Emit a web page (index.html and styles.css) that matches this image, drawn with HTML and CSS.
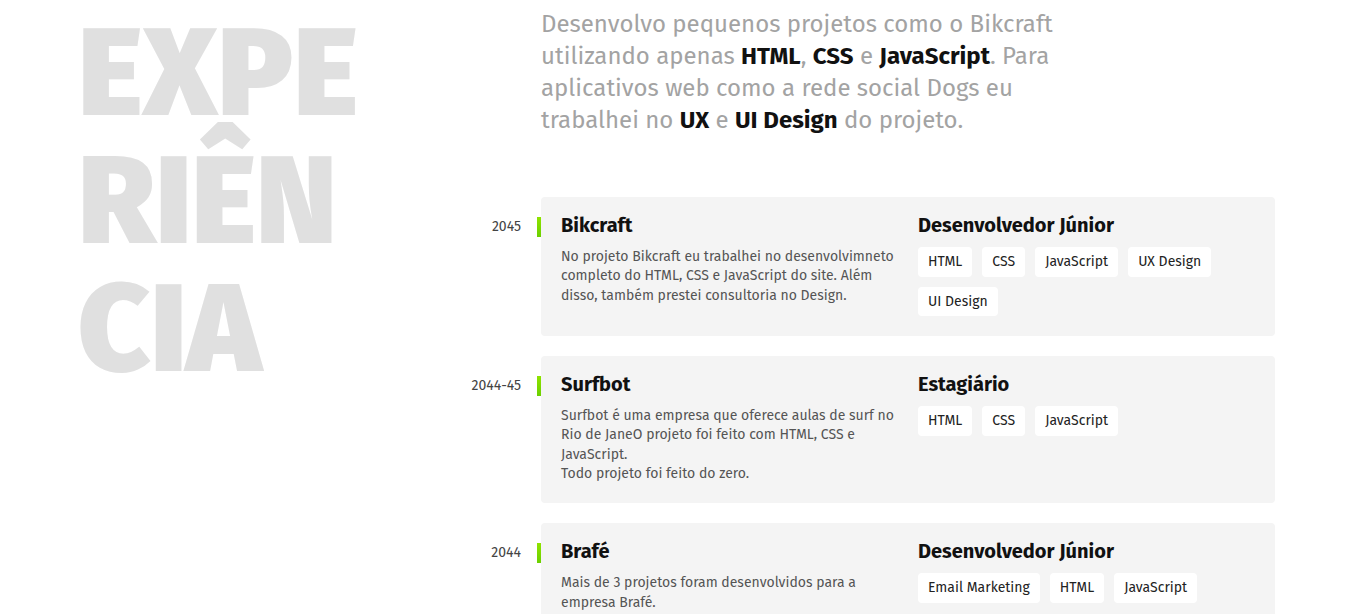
FILE: index.html
```html
<!DOCTYPE html>
<html lang="pt-BR">
<head>
<meta charset="utf-8">
<title>Experiência</title>
<link rel="stylesheet" href="styles.css">
</head>
<body>
<main class="page">
  <h1 class="title">EXPERIÊNCIA</h1>
  <p class="intro">Desenvolvo pequenos projetos como o Bikcraft utilizando apenas <strong>HTML</strong>, <strong>CSS</strong> e <strong>JavaScript</strong>. Para aplicativos web como a rede social Dogs eu trabalhei no <strong>UX</strong> e <strong>UI Design</strong> do projeto.</p>

  <section class="job">
    <span class="year">2045</span>
    <article class="card">
      <div class="card-main">
        <h2 class="card-title">Bikcraft</h2>
        <p class="card-desc">No projeto Bikcraft eu trabalhei no desenvolvimneto completo do HTML, CSS e JavaScript do site. Além disso, também prestei consultoria no Design.</p>
      </div>
      <div class="card-side">
        <h3 class="card-title">Desenvolvedor Júnior</h3>
        <ul class="tags">
          <li>HTML</li><li>CSS</li><li>JavaScript</li><li>UX Design</li><li>UI Design</li>
        </ul>
      </div>
    </article>
  </section>

  <section class="job">
    <span class="year">2044-45</span>
    <article class="card">
      <div class="card-main">
        <h2 class="card-title">Surfbot</h2>
        <p class="card-desc">Surfbot é uma empresa que oferece aulas de surf no Rio de JaneO projeto foi feito com HTML, CSS e JavaScript.<br>Todo projeto foi feito do zero.</p>
      </div>
      <div class="card-side">
        <h3 class="card-title">Estagiário</h3>
        <ul class="tags">
          <li>HTML</li><li>CSS</li><li>JavaScript</li>
        </ul>
      </div>
    </article>
  </section>

  <section class="job">
    <span class="year">2044</span>
    <article class="card">
      <div class="card-main">
        <h2 class="card-title">Brafé</h2>
        <p class="card-desc">Mais de 3 projetos foram desenvolvidos para a empresa Brafé.</p>
      </div>
      <div class="card-side">
        <h3 class="card-title">Desenvolvedor Júnior</h3>
        <ul class="tags">
          <li>Email Marketing</li><li>HTML</li><li>JavaScript</li>
        </ul>
      </div>
    </article>
  </section>
</main>
</body>
</html>
```

FILE: styles.css
```css
* { box-sizing: border-box; }

body {
  margin: 0;
  background: #fff;
  font-family: "Fira Sans", Roboto, "Noto Sans", sans-serif;
  color: #111;
}

.page {
  display: grid;
  grid-template-columns: 320px 1fr 734px;
  row-gap: 20px;
  padding: 8px 77px 40px 78px;
  align-items: start;
}

.title {
  grid-column: 1;
  grid-row: 1 / span 6;
  margin: 2px 0 0;
  width: 320px;
  font-size: 124px;
  line-height: 128px;
  font-weight: 900;
  color: #e0e0e0;
  word-break: break-all;
}

.intro {
  grid-column: 3;
  grid-row: 1;
  margin: 0 0 41px;
  max-width: 520px;
  font-size: 24px;
  line-height: 32px;
  color: #a3a3a3;
}
.intro strong { color: #111; font-weight: 700; }

.job {
  grid-column: 2 / 4;
  display: grid;
  grid-template-columns: 1fr 734px;
  align-items: start;
}

.year {
  justify-self: end;
  display: flex;
  align-items: center;
  gap: 16px;
  margin-top: 20px;
  height: 20px;
  font-size: 14px;
  line-height: 20px;
  color: #444;
}
.year::after {
  content: "";
  width: 4px;
  height: 20px;
  background: linear-gradient(#8fe300, #6bd000);
}

.card {
  display: grid;
  grid-template-columns: 1fr 1fr;
  column-gap: 20px;
  padding: 16px 20px 20px;
  background: #f4f4f4;
  border-radius: 4px;
}

.card-title {
  margin: 0 0 10px;
  font-size: 20px;
  line-height: 24px;
  font-weight: 700;
  color: #111;
}

.card-desc {
  margin: 0;
  font-size: 14px;
  line-height: 19.3px;
  color: #555;
}

.tags {
  list-style: none;
  margin: 0;
  padding: 0;
  display: flex;
  flex-wrap: wrap;
  gap: 10px;
}
.tags li {
  background: #fff;
  border-radius: 4px;
  padding: 5px 10px;
  font-size: 14px;
  line-height: 19.6px;
  color: #222;
}
```
